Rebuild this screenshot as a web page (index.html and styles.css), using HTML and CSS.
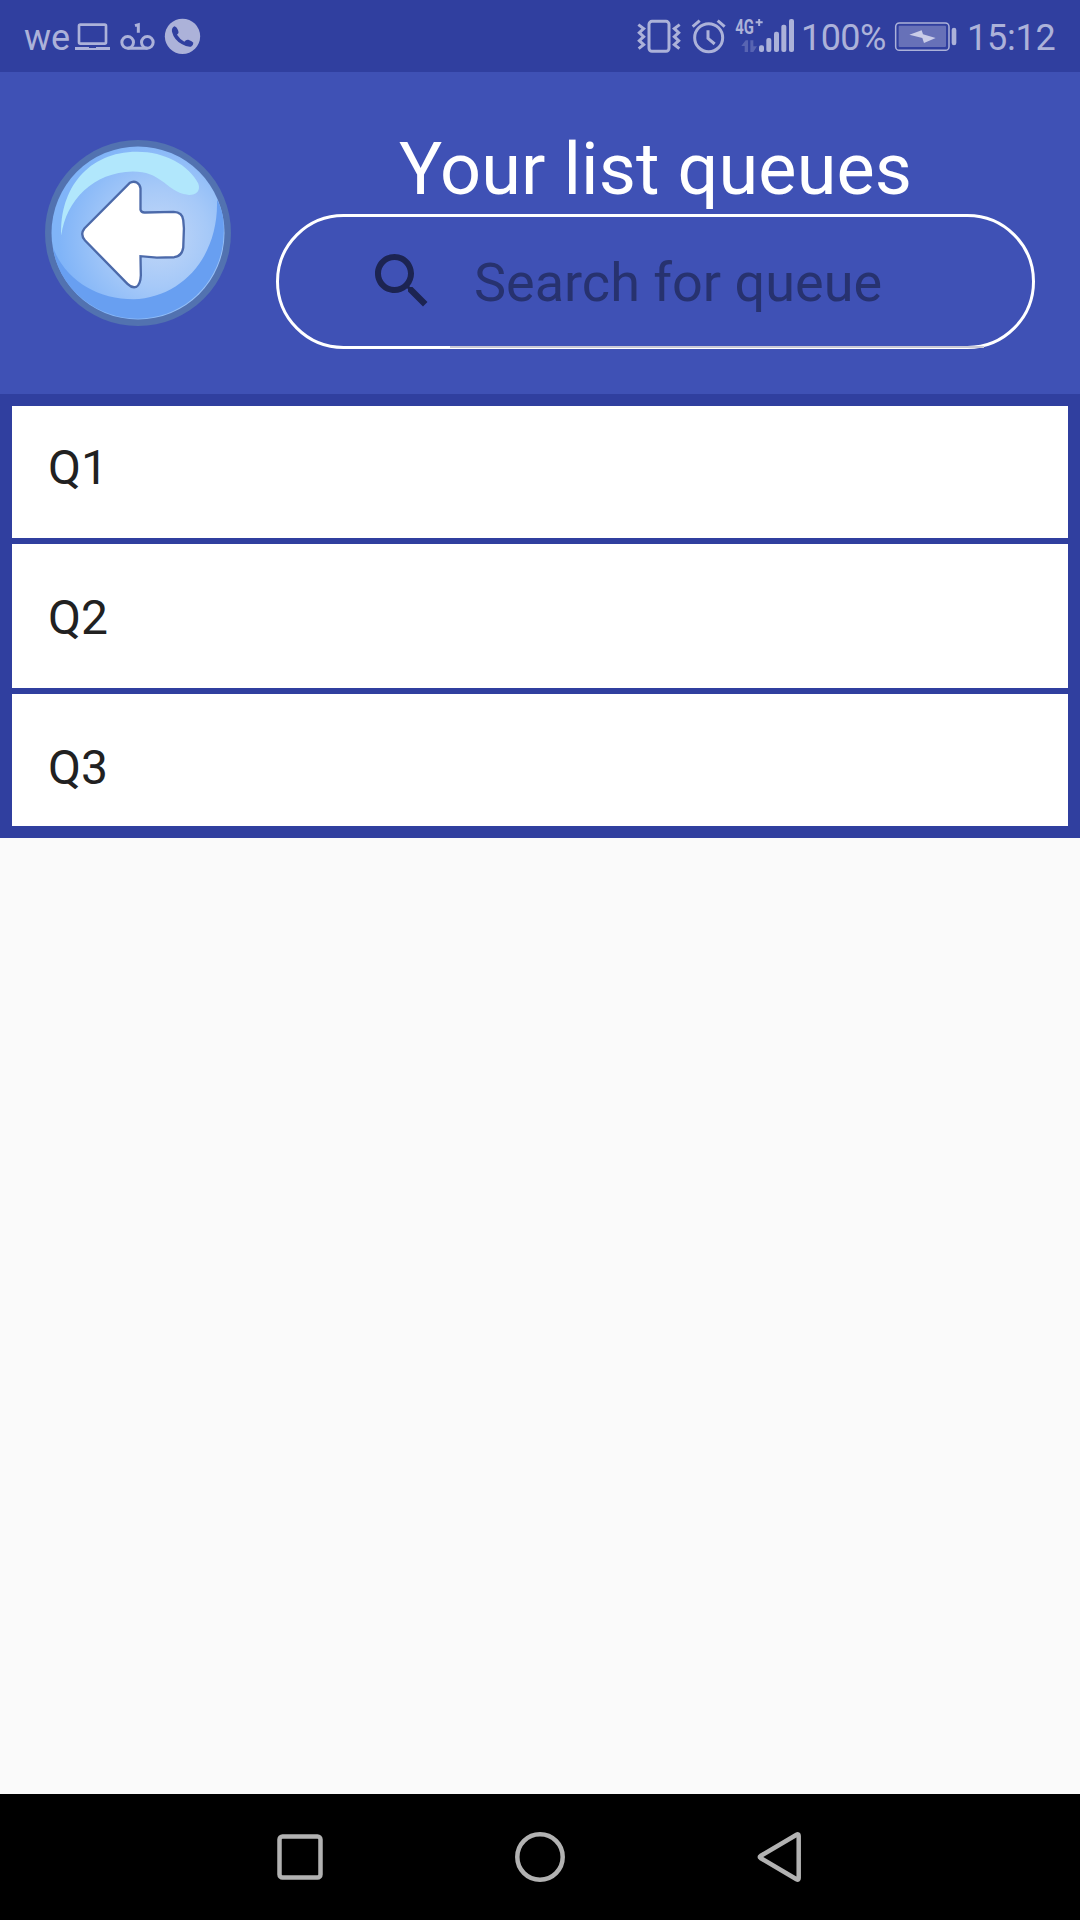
FILE: index.html
```
<!DOCTYPE html>
<html lang="en">
<head>
<meta charset="utf-8">
<title>Your list queues</title>
<link rel="stylesheet" href="styles.css">
</head>
<body>
<div class="screen">
  <div class="status">
    <div class="status-left">
      <span class="carrier">we</span>
      <svg class="ic" width="135" height="72" viewBox="210 0 405 216">
        <rect x="237" y="74" width="81" height="57" rx="4" fill="none" stroke="currentColor" stroke-width="8"/>
        <path d="M225 141H267V144H288V141H330V150H225Z" fill="currentColor"/>
        <g fill="none" stroke="currentColor" stroke-width="9">
          <circle cx="383" cy="127" r="17.5"/>
          <circle cx="442" cy="127" r="17.5"/>
          <path d="M383 145H442M415 98V74L405 77"/>
        </g>
        <circle cx="547.5" cy="109" r="53" fill="currentColor"/>
        <path class="handset" d="M523 79Q514 84 516 95Q522 119 545 132Q562 142 573 140Q580 137 580 128Q577 123 565 119Q558 118 553 125Q539 117 531 104Q538 99 535 93Q530 80 523 79Z"/>
      </svg>
    </div>
    <div class="status-right">
      <svg class="ic" width="165" height="72" viewBox="45 0 495 216">
        <g fill="none" stroke="currentColor" stroke-width="9">
          <rect x="87" y="64" width="60" height="90" rx="9"/>
          <path d="M55 74L71 86L58 98L71 110L58 122L71 134L56 146M179 74L163 86L176 98L163 110L176 122L163 134L178 146"/>
          <circle cx="266" cy="113" r="42"/>
          <path d="M218 80L239 62M293 62L314 80M264 91V115L284 132"/>
        </g>
        <text class="net" x="346" y="101" textLength="56" lengthAdjust="spacingAndGlyphs">4G</text>
        <path d="M407 67H428M417.500 57V78" stroke="currentColor" stroke-width="6"/>
        <path class="dim" d="M364 138L377 121H384V156H374V138ZM391 121H400V139H411L400 156H391Z"/>
        <g fill="currentColor">
          <rect x="417" y="136" width="15" height="20" rx="6"/>
          <rect x="439" y="114" width="15" height="42" rx="6"/>
          <rect x="462" y="95" width="15" height="61" rx="6"/>
          <rect x="484" y="74" width="15" height="82" rx="6"/>
          <rect x="507" y="57" width="15" height="99" rx="6"/>
        </g>
      </svg>
      <span class="percent">100%</span>
      <svg class="ic" width="66" height="72" viewBox="160 0 198 216">
        <rect x="168" y="69" width="160" height="82" rx="11" fill="none" stroke="currentColor" stroke-width="4.500"/>
        <rect class="charge" x="177" y="77" width="142" height="64" rx="3"/>
        <path d="M209 104L246 91L250 103L288 114L253 129L248 114Z" fill="#c9cce8"/>
        <rect x="336" y="83" width="14" height="53" rx="7" fill="currentColor"/>
      </svg>
      <span class="clock">15:12</span>
    </div>
  </div>

  <header class="header">
    <svg class="back" viewBox="45 60 557 557">
      <defs>
        <radialGradient id="ball" gradientUnits="userSpaceOnUse" cx="385" cy="350" r="300">
          <stop offset="0" stop-color="#c2d7f7"/>
          <stop offset="0.500" stop-color="#a6c9f8"/>
          <stop offset="1" stop-color="#80b4f8"/>
        </radialGradient>
      </defs>
      <circle cx="323.500" cy="338.500" r="278.500" fill="#5272b0"/>
      <circle cx="323.500" cy="338.500" r="259" fill="url(#ball)"/>
      <path d="M69 382C105 478 200 537 310 537C455 532 566 410 560 238C580 275 582 310 580 345C576 480 465 595 323 595C200 595 85 505 69 382Z" fill="#689ff1"/>
      <path d="M94 346C88 205 175 95 320 95C405 95 475 135 504 190C514 217 490 230 460 222C405 205 390 154 308 154C190 156 108 240 94 346Z" fill="#b1e7fc"/>
      <path d="M298 189C314 179 329 189 331 205V269Q333 278 345 277L430 275Q457 276 459 300L461 325L459 382Q455 408 432 411L380 412L331 408L332 465Q331 493 318 500Q305 504 292 491L165 361Q149 343 163 325Z" fill="#fff" stroke="#4c6aaa" stroke-width="7"/>
    </svg>
    <div class="heading">
      <h1 class="title">Your list queues</h1>
      <div class="search">
        <svg class="glass" viewBox="0 0 24 24"><path d="M15.500 14h-.790l-.280-.270C15.410 12.590 16 11.110 16 9.500 16 5.910 13.090 3 9.500 3S3 5.910 3 9.500 5.910 16 9.500 16c1.610 0 3.090-.590 4.230-1.570l.270.280v.790l5 4.990L20.490 19l-4.990-5zm-6 0C7.010 14 5 11.990 5 9.500S7.010 5 9.500 5 14 7.010 14 9.500 11.990 14 9.500 14z"/></svg>
        <span class="placeholder">Search for queue</span>
        <span class="underline"></span>
      </div>
    </div>
  </header>

  <ul class="list">
    <li class="item first">Q1</li>
    <li class="item">Q2</li>
    <li class="item last">Q3</li>
  </ul>

  <main class="blank"></main>

  <nav class="nav">
    <svg width="50" height="54" viewBox="0 0 50 54"><rect x="4.500" y="6.500" width="41" height="41" rx="3"/></svg>
    <svg width="54" height="54" viewBox="0 0 54 54"><circle cx="27" cy="27" r="22.700"/></svg>
    <svg width="50" height="54" viewBox="0 0 50 54"><path d="M43.700 6Q43.700 3.500 41.500 4.700L5.500 26Q4 27 5.500 28L41.500 49.300Q43.700 50.500 43.700 48Z"/></svg>
  </nav>
</div>
</body>
</html>
```
FILE: styles.css
```
* { box-sizing: border-box; margin: 0; padding: 0; }

body {
  width: 1080px;
  height: 1920px;
  overflow: hidden;
  font-family: Roboto, "Liberation Sans", sans-serif;
  background: #fafafa;
}

.screen { display: flex; flex-direction: column; height: 1920px; }

/* Status bar */
.status {
  display: flex;
  justify-content: space-between;
  height: 72px;
  padding: 0 24px;
  background: #303f9f;
  color: #acb2d9;
  font-size: 36px;
  line-height: 77px;
}
.status-left, .status-right { display: flex; }
.ic { display: block; flex: none; }
.carrier { width: 46px; }
.handset { fill: #303f9f; }
.net { font-size: 60px; font-weight: 700; fill: currentColor; }
.dim { fill: #5864b2; }
.charge { fill: #6771b8; }
.percent { width: 93px; padding-left: 1px; letter-spacing: -0.6px; }
.clock { width: 89px; margin-left: 8px; letter-spacing: -0.2px; }

/* Header */
.header {
  display: flex;
  height: 322px;
  padding: 53px 45px 45px;
  background: #3f51b5;
}
.back { width: 186px; height: 186px; margin-top: 15px; flex: none; }
.heading { width: 759px; margin-left: 45px; }
.title {
  height: 89px;
  color: #fff;
  font-size: 72px;
  font-weight: 400;
  letter-spacing: 0.1px;
  line-height: 89px;
  text-align: center;
}
.search {
  position: relative;
  display: flex;
  align-items: center;
  height: 135px;
  padding-left: 87px;
  border: 3px solid #fff;
  border-radius: 68px;
}
.glass { width: 72px; height: 72px; margin-bottom: 2px; fill: #1c2452; }
.placeholder {
  margin: 2px 0 0 36px;
  color: #27326f;
  font-size: 54px;
  line-height: 64px;
}
.underline {
  position: absolute;
  left: 171px;
  right: 48px;
  bottom: -2px;
  height: 2px;
  background: #c9c9d6;
}

/* Queue list */
.list {
  display: flex;
  flex-direction: column;
  gap: 6px;
  height: 444px;
  padding: 12px;
  list-style: none;
  background: #303f9f;
}
.item {
  height: 144px;
  padding: 46px 36px 0;
  background: #fff;
  color: #212121;
  font-size: 48px;
  line-height: 56px;
}
.item.first { height: 132px; padding-top: 34px; }
.item.last { height: 132px; }

.blank { flex: 1; background: #fafafa; }

/* System navigation */
.nav {
  display: flex;
  justify-content: space-between;
  align-items: center;
  height: 126px;
  padding: 0 275px;
  background: #000;
}
.nav svg { fill: none; stroke: #b2b2b2; stroke-width: 4.500; }
```
